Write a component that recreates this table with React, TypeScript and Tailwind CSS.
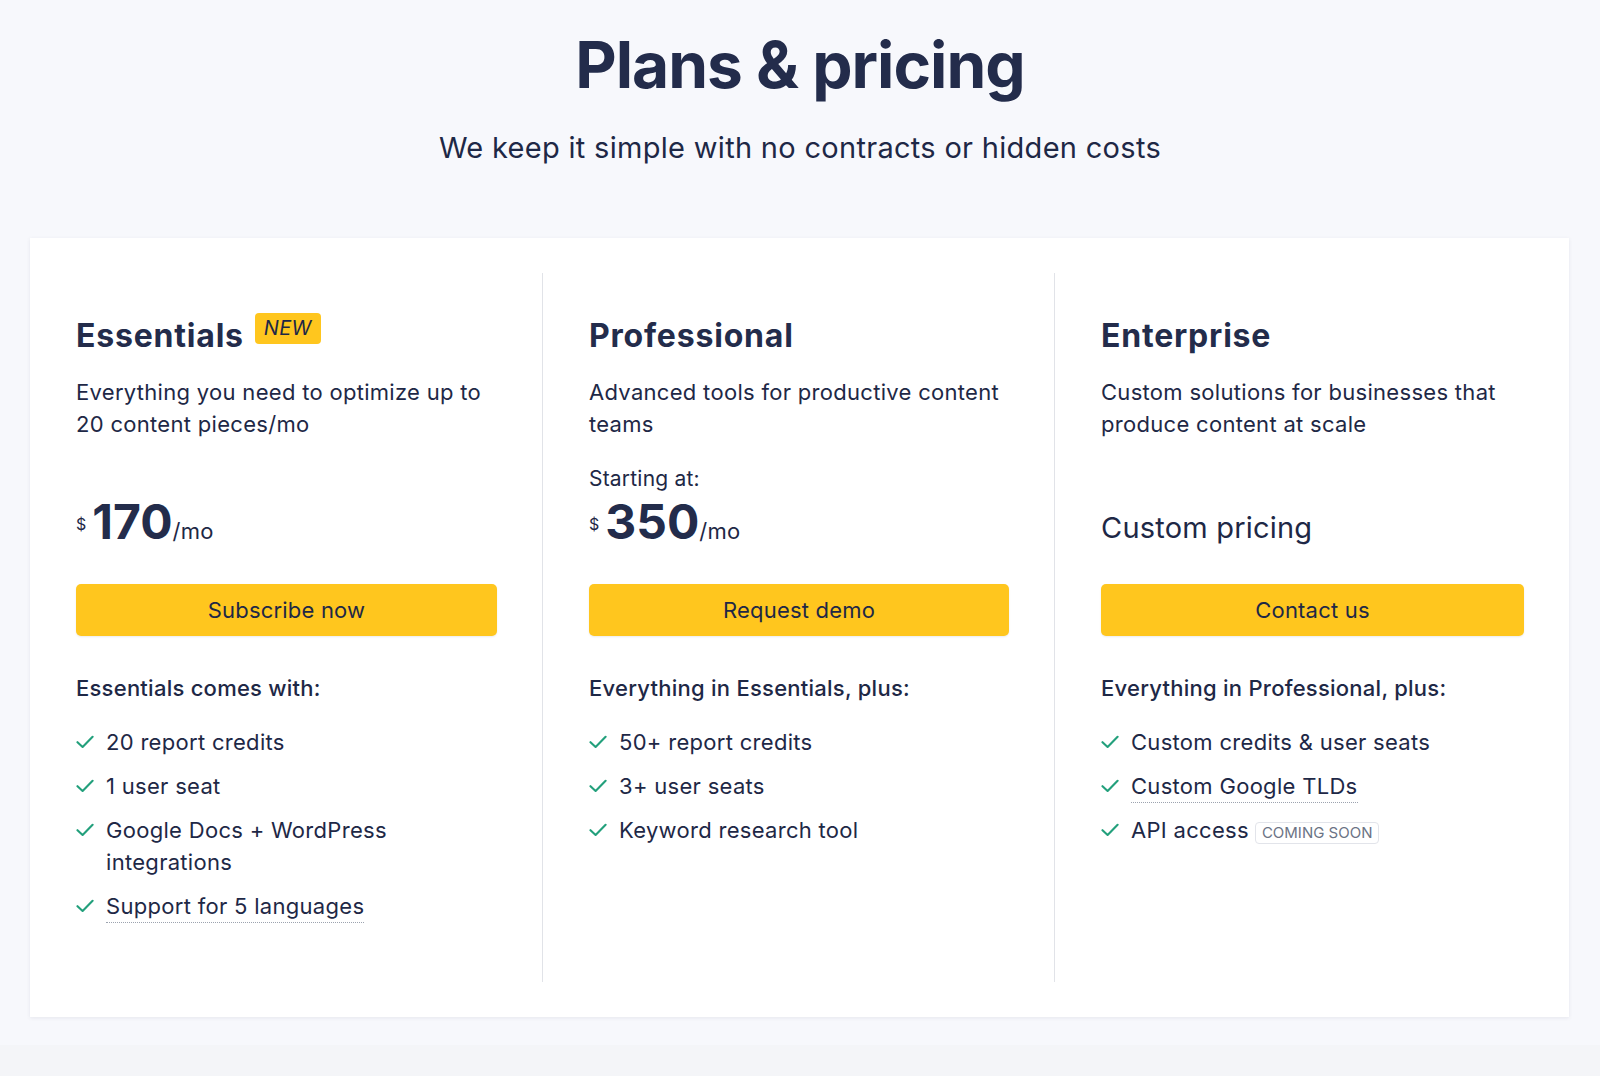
import type { ReactNode } from 'react';

type Feature = { text: string; dotted?: boolean; badge?: string };

type Plan = {
  name: string;
  isNew?: boolean;
  description: string;
  starting?: boolean;
  price?: string;
  cta: string;
  listTitle: string;
  features: Feature[];
};

const PLANS: Plan[] = [
  {
    name: 'Essentials',
    isNew: true,
    description: 'Everything you need to optimize up to 20 content pieces/mo',
    price: '170',
    cta: 'Subscribe now',
    listTitle: 'Essentials comes with:',
    features: [
      { text: '20 report credits' },
      { text: '1 user seat' },
      { text: 'Google Docs + WordPress integrations' },
      { text: 'Support for 5 languages', dotted: true },
    ],
  },
  {
    name: 'Professional',
    description: 'Advanced tools for productive content teams',
    starting: true,
    price: '350',
    cta: 'Request demo',
    listTitle: 'Everything in Essentials, plus:',
    features: [
      { text: '50+ report credits' },
      { text: '3+ user seats' },
      { text: 'Keyword research tool' },
    ],
  },
  {
    name: 'Enterprise',
    description: 'Custom solutions for businesses that produce content at scale',
    cta: 'Contact us',
    listTitle: 'Everything in Professional, plus:',
    features: [
      { text: 'Custom credits & user seats' },
      { text: 'Custom Google TLDs', dotted: true },
      { text: 'API access', badge: 'Coming soon' },
    ],
  },
];

function CheckIcon() {
  return (
    <svg width="18" height="14" viewBox="0 0 18 14" fill="none" className="shrink-0 mt-[9px]">
      <path d="M1.5 7.2 6.6 12 16.6 1.8" stroke="#23a07c" strokeWidth="2.1" strokeLinecap="round" strokeLinejoin="round" />
    </svg>
  );
}

function PriceArea({ plan }: { plan: Plan }): ReactNode {
  if (!plan.price) {
    return <div className="text-[29px] leading-[36px] tracking-[0.2px] text-[#1e2846]">Custom pricing</div>;
  }
  return (
    <div>
      {plan.starting && (
        <div className="text-[21px] leading-7 mb-[5px] tracking-[0.2px] text-[#1e2846]">Starting at:</div>
      )}
      <div className="leading-none text-[#1e2846] whitespace-nowrap">
        <span className="text-[16px] leading-none align-[9px] mr-[6px]">$</span>
        <span className="text-[48px] leading-[48px] font-bold text-[#232c4b]">{plan.price}</span>
        <span className="text-[22px] leading-none tracking-[0.3px]">/mo</span>
      </div>
    </div>
  );
}

function PlanColumn({ plan, first }: { plan: Plan; first: boolean }) {
  return (
    <div className={`flex flex-col pt-[43px] pb-[60px] ${first ? 'pl-[46px] pr-[45px]' : 'pl-[46px] pr-[45px] border-l border-[#e1e3e8]'}`}>
      <div className="flex items-start gap-[11px]">
        <h2 className="text-[32px] leading-10 font-bold tracking-[0.8px] text-[#232c4b]">{plan.name}</h2>
        {plan.isNew && (
          <span className="-mt-[3px] h-[31px] px-[9px] rounded-[4px] bg-[#ffc61e] text-[20px] leading-[31px] italic tracking-[0.3px] text-[#1e2846]">
            NEW
          </span>
        )}
      </div>

      <p className="mt-5 h-[64px] text-[22px] leading-8 tracking-[0.3px] text-[#1e2846]">{plan.description}</p>

      <div className="h-[106px] flex flex-col justify-end">
        <PriceArea plan={plan} />
      </div>

      <button className="mt-[38px] h-[52px] w-full rounded-[5px] bg-[#ffc61e] text-[22px] tracking-[0.2px] text-[#1e2846] shadow-[0_1px_2px_rgba(0,0,0,0.08)]">
        {plan.cta}
      </button>

      <h3 className="mt-[36px] text-[22px] leading-8 font-medium tracking-[0.25px] text-[#1e2846]">{plan.listTitle}</h3>

      <ul className="mt-[22px] flex flex-col gap-3">
        {plan.features.map((f) => (
          <li key={f.text} className="flex items-start gap-3 text-[22px] leading-8 tracking-[0.3px] text-[#1e2846]">
            <CheckIcon />
            <span>
              {f.dotted ? (
                <span className="border-b border-dotted border-[#9ca3af] pb-[3px]">{f.text}</span>
              ) : (
                f.text
              )}
              {f.badge && (
                <span className="ml-[6px] inline-block h-[22px] px-[6px] rounded-[4px] border border-[#e2e4ea] text-[15px] leading-[20px] tracking-normal uppercase text-[#6b7385]">
                  {f.badge}
                </span>
              )}
            </span>
          </li>
        ))}
      </ul>
    </div>
  );
}

export default function App() {
  return (
    <div className="min-h-screen bg-[#f7f8fc] font-[family-name:Inter,sans-serif] flex flex-col">
      <header className="pt-[33px] text-center">
        <h1 className="text-[64px] leading-[64px] font-bold tracking-[-1px] text-[#232c4b]">Plans &amp; pricing</h1>
        <p className="mt-[33px] text-[29px] leading-9 tracking-[0.3px] text-[#1e2846]">We keep it simple with no contracts or hidden costs</p>
      </header>

      <section className="mt-[72px] ml-[30px] mr-[31px] bg-white py-[35px] shadow-[0_1px_4px_rgba(20,30,60,0.08)]">
        <div className="grid grid-cols-[512px_512px_1fr]">
          {PLANS.map((plan, i) => (
            <PlanColumn key={plan.name} plan={plan} first={i === 0} />
          ))}
        </div>
      </section>

      <div className="flex-1 mt-[28px] bg-[#f4f5f8]" />
    </div>
  );
}
